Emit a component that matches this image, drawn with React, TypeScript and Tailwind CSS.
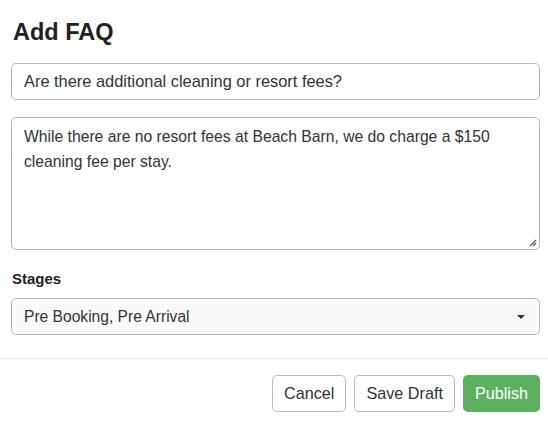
import React from "react";

export default function App() {
  return (
    <div
      className="w-[548px] h-[422px] bg-white text-[#333333] overflow-hidden"
      style={{ fontFamily: '"Liberation Sans", Arial, sans-serif' }}
    >
      <div className="pl-[11px] pr-[8px]">
        <h1 className="pt-[18px] pl-[2px] text-[23.5px] leading-[28px] font-bold text-[#222222]">Add FAQ</h1>
        <div className="mt-[17px] h-[37px] flex items-center px-[12px] border border-[#b3b9bf] rounded-[5px] text-[16.4px]">
          Are there additional cleaning or resort fees?
        </div>
        <div className="mt-[17px] h-[133px] relative px-[12px] pt-[6px] border border-[#b3b9bf] rounded-[5px] text-[15.7px] leading-[25px]">
          While there are no resort fees at Beach Barn, we do charge a $150 cleaning fee per stay.
          <svg className="absolute right-[2px] bottom-[2px]" width="9" height="9" viewBox="0 0 9 9">
            <path d="M8 2 L2 8 M8 5 L5 8" stroke="#555" strokeWidth="1.2" />
          </svg>
        </div>
        <div className="mt-[19px] pl-[1px] text-[15px] leading-[20px] font-bold text-[#222222]">Stages</div>
        <div className="mt-[9px] h-[37px] flex items-center justify-between px-[12px] bg-[#fafafa] border border-[#b3b9bf] rounded-[5px] text-[15.6px]">
          <span>Pre Booking, Pre Arrival</span>
          <svg width="10" height="6" viewBox="0 0 10 6" className="mr-[1px]">
            <path d="M1 1 L9 1 L5 5 Z" fill="#333" />
          </svg>
        </div>
      </div>
      <div className="mt-[23px] border-t border-[#e2e4e8]" />
      <div className="pr-[8px] pt-[16px] flex justify-end gap-[8px] text-[16.2px]">
        <button className="h-[37px] px-[11px] border border-[#b3b9bf] rounded-[5px] bg-white text-[#333]">Cancel</button>
        <button className="h-[37px] px-[11px] border border-[#b3b9bf] rounded-[5px] bg-white text-[#333]">Save Draft</button>
        <button className="h-[37px] px-[12px] rounded-[5px] bg-[#5cb05f] text-white">Publish</button>
      </div>
    </div>
  );
}
